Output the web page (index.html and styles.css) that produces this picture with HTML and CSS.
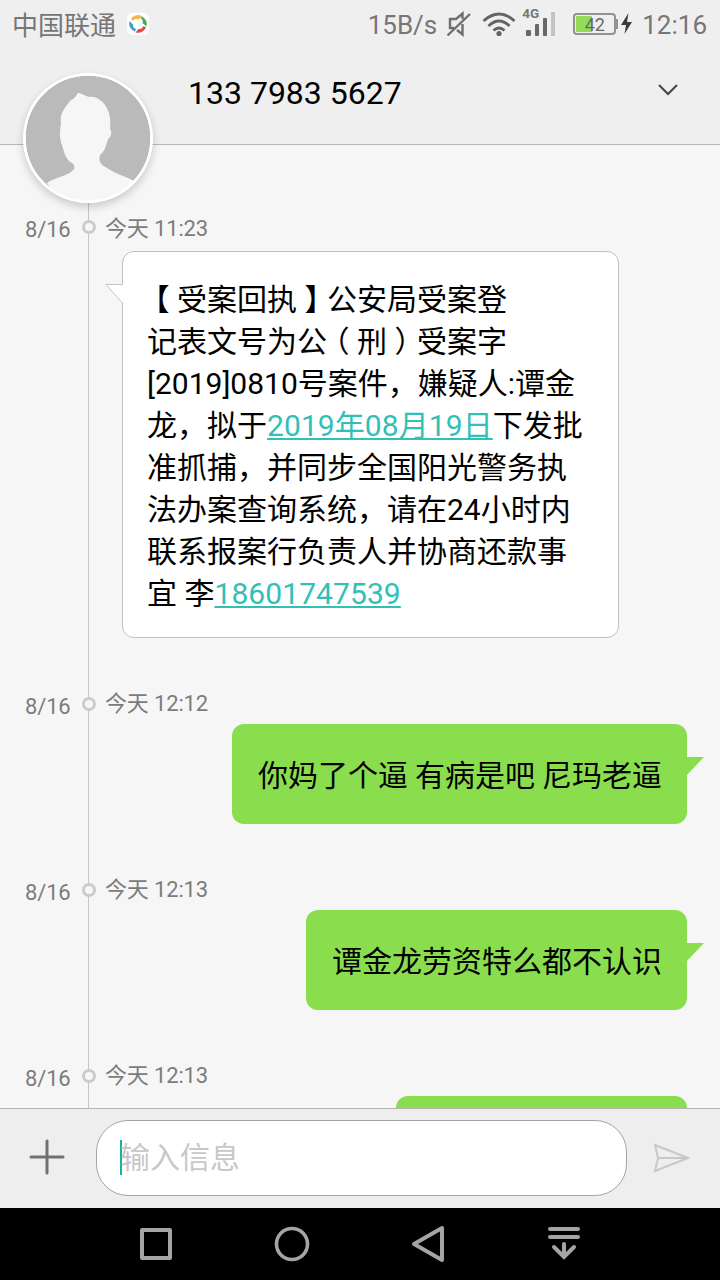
FILE: index.html
```html
<!DOCTYPE html>
<html lang="zh-CN">
<head>
<meta charset="utf-8">
<title>短信</title>
<link rel="stylesheet" href="styles.css">
</head>
<body>
<div class="phone">
  <header class="header">
    <div class="status">
      <span class="carrier">中国联通</span>
      <svg class="app-logo" width="22" height="22" viewBox="0 0 22 22">
        <rect width="22" height="22" rx="6" fill="#fff"/>
        <path d="M4 5.500Q9 0 15 3.200L11.500 6.500Q8 5 5 8Z" fill="#f6b84a"/>
        <path d="M14.500 3.500Q21 6.500 19.500 13.500L15.500 10Q16.500 7 13.500 5Z" fill="#3fae5a"/>
        <path d="M19 14.500Q15.500 21 8.500 19.500L11.500 16Q15 16.500 16.500 13Z" fill="#dc4b40"/>
        <path d="M8 18.500Q0.500 15 2.500 8L6 11.500Q5.500 14.500 9 16Z" fill="#3c9fd2"/>
      </svg>
      <span class="speed">15B/s</span>
      <svg class="mute" width="26" height="28" viewBox="0 0 26 28" fill="none" stroke="#6e6e6e" stroke-width="2.400">
        <path d="M16.500 9V3.500L10 9H4V18H8M16.500 14V24.500L11 20"/>
        <path d="M1.500 25.500L24 4"/>
      </svg>
      <svg class="wifi" width="34" height="26" viewBox="0 0 34 26" fill="none" stroke="#646464" stroke-width="2.900">
        <path d="M1.500 10Q17-4 32.500 10M6.500 15Q17 5 27.500 15M11.500 19.500Q17 14.500 22.500 19.500"/>
        <circle cx="17" cy="22.500" r="2.600" fill="#646464" stroke="none"/>
      </svg>
      <span class="cell">
        <span class="net">4G</span>
        <svg width="30" height="25" viewBox="0 0 30 25" fill="#686868">
          <rect x="0" y="18" width="5" height="6" rx="1"/>
          <rect x="9" y="12" width="4" height="12" rx="1"/>
          <rect x="17" y="6" width="4" height="18" rx="1"/>
          <rect x="25" y="0" width="4" height="24" fill="#c4c4c4"/>
        </svg>
      </span>
      <span class="battery"><span class="level">42</span></span>
      <svg class="bolt" width="14" height="24" viewBox="0 0 14 24">
        <path d="M8.500 1L1 13H6L4.500 22L12 10H7Z" fill="#3c3c3c"/>
      </svg>
      <span class="clock">12:16</span>
    </div>
    <div class="title-bar">
      <h1 class="number">133 7983 5627</h1>
      <svg class="chevron" width="22" height="14" viewBox="0 0 22 14" fill="none" stroke="#444" stroke-width="2">
        <path d="M2 2L11 11L20 2"/>
      </svg>
    </div>
    <svg class="avatar" width="130" height="130" viewBox="0 0 130 130">
      <defs><clipPath id="face"><circle cx="65" cy="65" r="63"/></clipPath></defs>
      <circle cx="65" cy="65" r="65" fill="#fff"/>
      <circle cx="65" cy="65" r="62.500" fill="#bababa"/>
      <path clip-path="url(#face)" fill="#f6f6f6" d="M55 20C59 20 61 23 67 24C73 23 79 28 82 32C87 39 88 47 87 56C90 60 87 65 85 66C83 73 82 78 77 82C75 90 79 92 84 95C92 101 105 104 111 108C105 120 88 129 65 129C45 129 30 121 24 110C30 105 46 103 51 96C52 92 50 90 47 89C42 84 41 79 39 72C36 65 37 58 38 50C36 42 42 34 48 27C51 26 53 23 55 20Z"/>
      <circle cx="65" cy="65" r="63.500" fill="none" stroke="#fff" stroke-width="2.500"/>
    </svg>
  </header>

  <main class="thread">
    <section class="message received">
      <div class="meta"><span class="date">8/16</span><i class="dot"></i><span class="time">今天 11:23</span></div>
      <div class="bubble">
        <svg class="tail" width="19" height="22" viewBox="0 0 19 22"><path d="M18 1.500H1L18 20.500" fill="#fff" stroke="#c4c4c4"/></svg>
        <span class="bracket">【</span>受案回执<span class="bracket">】</span>公安局受案登<br>记表文号为公<span class="bracket">（</span>刑<span class="bracket">）</span>受案字<br>[2019]0810号案件，嫌疑人:谭金<br>龙，拟于<a class="link">2019年08月19日</a>下发批<br>准抓捕，并同步全国阳光警务执<br>法办案查询系统，请在24小时内<br>联系报案行负责人并协商还款事<br>宜 李<a class="link">18601747539</a>
      </div>
    </section>
    <section class="message sent">
      <div class="meta"><span class="date">8/16</span><i class="dot"></i><span class="time">今天 12:12</span></div>
      <div class="bubble">
        <svg class="tail" width="18" height="19" viewBox="0 0 18 19"><path d="M0 0H18L0 19Z" fill="#8ade4e"/></svg>
        你妈了个逼 有病是吧 尼玛老逼
      </div>
    </section>
    <section class="message sent">
      <div class="meta"><span class="date">8/16</span><i class="dot"></i><span class="time">今天 12:13</span></div>
      <div class="bubble">
        <svg class="tail" width="18" height="19" viewBox="0 0 18 19"><path d="M0 0H18L0 19Z" fill="#8ade4e"/></svg>
        谭金龙劳资特么都不认识
      </div>
    </section>
    <section class="message sent">
      <div class="meta"><span class="date">8/16</span><i class="dot"></i><span class="time">今天 12:13</span></div>
      <div class="bubble clipped"></div>
    </section>
  </main>

  <footer class="composer">
    <svg class="plus" width="36" height="36" viewBox="0 0 36 36" stroke="#707070" stroke-width="3" stroke-linecap="round">
      <path d="M2 18H34M18 2V34"/>
    </svg>
    <div class="field"><span class="caret"></span><span class="placeholder">输入信息</span></div>
    <svg class="send" width="38" height="30" viewBox="0 0 38 30" fill="none" stroke="#c8c8c8" stroke-width="2">
      <path d="M2 2L35 15L2 28L5 15ZM5 15H35"/>
    </svg>
  </footer>

  <nav class="navbar">
    <svg width="36" height="40" viewBox="0 0 36 40" fill="none" stroke="#a4a4a4" stroke-width="4" stroke-linejoin="round"><rect x="4" y="6" width="28" height="28"/></svg>
    <svg width="36" height="40" viewBox="0 0 36 40" fill="none" stroke="#a4a4a4" stroke-width="3.600"><circle cx="18" cy="20" r="15.500"/></svg>
    <svg width="36" height="40" viewBox="0 0 36 40" fill="none" stroke="#a4a4a4" stroke-width="4" stroke-linejoin="round"><path d="M32 4V36L4 20Z"/></svg>
    <svg width="36" height="40" viewBox="0 0 36 40" fill="none" stroke="#a4a4a4" stroke-width="4" stroke-linecap="round"><path d="M4 5H32M4 13H32M18 20V32M8 23L18 33L28 23"/></svg>
  </nav>
</div>
</body>
</html>
```
FILE: styles.css
```css
* {
  box-sizing: border-box;
}

body {
  margin: 0;
  font-family: Roboto, "Noto Sans CJK SC", sans-serif;
  color: #000;
}

.phone {
  display: flex;
  flex-direction: column;
  width: 720px;
  height: 1280px;
  overflow: hidden;
  background: #f6f6f6;
}

.phone svg {
  display: block;
  flex: none;
}

.header {
  position: relative;
  z-index: 1;
  height: 145px;
  background: #efefef;
  border-bottom: 1px solid #b8b8b8;
}

.status {
  display: flex;
  align-items: center;
  height: 50px;
  padding: 0 13px 0 12px;
  font-size: 26px;
  line-height: 50px;
  color: #767676;
}

.carrier {
  padding-top: 1px;
}

.app-logo {
  margin: 0 0 2px 11px;
}

.speed {
  margin-left: auto;
}

.mute {
  margin: 0 0 2px 9px;
}

.wifi {
  margin: 0 0 2px 10px;
}

.cell {
  position: relative;
  margin: 0 0 2px 10px;
}

.net {
  position: absolute;
  left: -4px;
  top: -5px;
  font-size: 13.500px;
  font-weight: 700;
  line-height: 13px;
}

.battery {
  display: flex;
  position: relative;
  width: 43px;
  height: 22px;
  margin: 0 0 2px 17px;
  padding: 1px;
  border: 2px solid #929292;
  border-radius: 4px;
  background: linear-gradient(90deg, #94dc58 16px, transparent 16px) 1px 1px / 37px 16px no-repeat;
}

.battery::after {
  content: "";
  position: absolute;
  top: 4px;
  right: -4px;
  width: 2px;
  height: 10px;
  background: #929292;
}

.level {
  width: 100%;
  font-size: 18px;
  line-height: 17px;
  text-align: center;
  color: #686868;
}

.bolt {
  margin: 0 0 2px 4px;
}

.clock {
  margin-left: 8px;
}

.title-bar {
  display: flex;
  align-items: center;
  justify-content: space-between;
  height: 86px;
  padding: 0 41px 0 188px;
}

.number {
  margin: 0;
  font-size: 32px;
  font-weight: 400;
  line-height: 40px;
}

.chevron {
  margin-bottom: 6px;
}

.avatar {
  position: absolute;
  left: 23px;
  top: 73px;
  border-radius: 50%;
  box-shadow: 0 4px 8px rgba(0, 0, 0, 0.18);
}

.thread {
  position: relative;
  flex: 1;
  min-height: 0;
  padding-top: 74px;
  overflow: hidden;
}

.thread::before {
  content: "";
  position: absolute;
  left: 88px;
  top: 0;
  bottom: 0;
  width: 1px;
  background: #c6c6c6;
}

.message {
  display: flex;
  flex-direction: column;
  margin-bottom: 54px;
}

.meta {
  display: flex;
  align-items: flex-start;
  height: 32px;
  font-size: 22px;
  line-height: 18px;
  letter-spacing: -0.150px;
  color: #7c7c7c;
}

.date {
  width: 57px;
  margin: 6px 0 0 25px;
}

.dot {
  position: relative;
  width: 14px;
  height: 14px;
  margin-top: 5px;
  border: 3px solid #cbcbcb;
  border-radius: 50%;
  background: #f6f6f6;
}

.time {
  margin: 3px 0 0 9px;
}

.received .date {
  margin-top: 2px;
}

.received .dot,
.received .time {
  margin-top: 1px;
}

.bubble {
  position: relative;
  font-size: 30px;
  line-height: 42px;
  white-space: nowrap;
  border-radius: 12px;
}

.received .bubble {
  width: 497px;
  height: 387px;
  margin-left: 122px;
  padding: 27px 0 0 24px;
  background: #fff;
  border: 1px solid #c0c0c0;
}

.sent .bubble {
  align-self: flex-end;
  height: 100px;
  margin-right: 33px;
  padding: 31px 25px 0 26px;
  background: #8ade4e;
  word-spacing: -0.400px;
}

.sent .clipped {
  width: 291px;
}

.tail {
  position: absolute;
}

.received .tail {
  left: -18px;
  top: 31px;
}

.sent .tail {
  right: -17px;
  top: 33px;
}

/* Half-width brackets centred in a full character cell */
.bracket {
  display: inline-block;
  width: 30px;
  text-align: center;
  font-feature-settings: "halt";
}

.link {
  color: #32bfb8;
  letter-spacing: 0.080px;
  text-decoration: underline;
  text-decoration-thickness: 2px;
  text-underline-offset: 2px;
  text-decoration-skip-ink: none;
}

.composer {
  display: flex;
  align-items: center;
  height: 100px;
  padding: 0 29px 2px;
  background: #eee;
  border-top: 1px solid #b4b4b4;
}

.plus {
  margin-bottom: 2px;
}

.field {
  display: flex;
  align-items: center;
  width: 531px;
  height: 76px;
  margin-left: 31px;
  padding-left: 23px;
  background: #fff;
  border: 1px solid #a4a4a4;
  border-radius: 32px;
}

.caret {
  width: 2px;
  height: 35px;
  margin-right: -2px;
  background: #18b29e;
}

.placeholder {
  font-size: 30px;
  line-height: 42px;
  color: #c8c8c8;
}

.send {
  margin-left: auto;
}

.navbar {
  display: flex;
  align-items: center;
  gap: 100px;
  height: 72px;
  padding-left: 138px;
  background: #000;
}
```
